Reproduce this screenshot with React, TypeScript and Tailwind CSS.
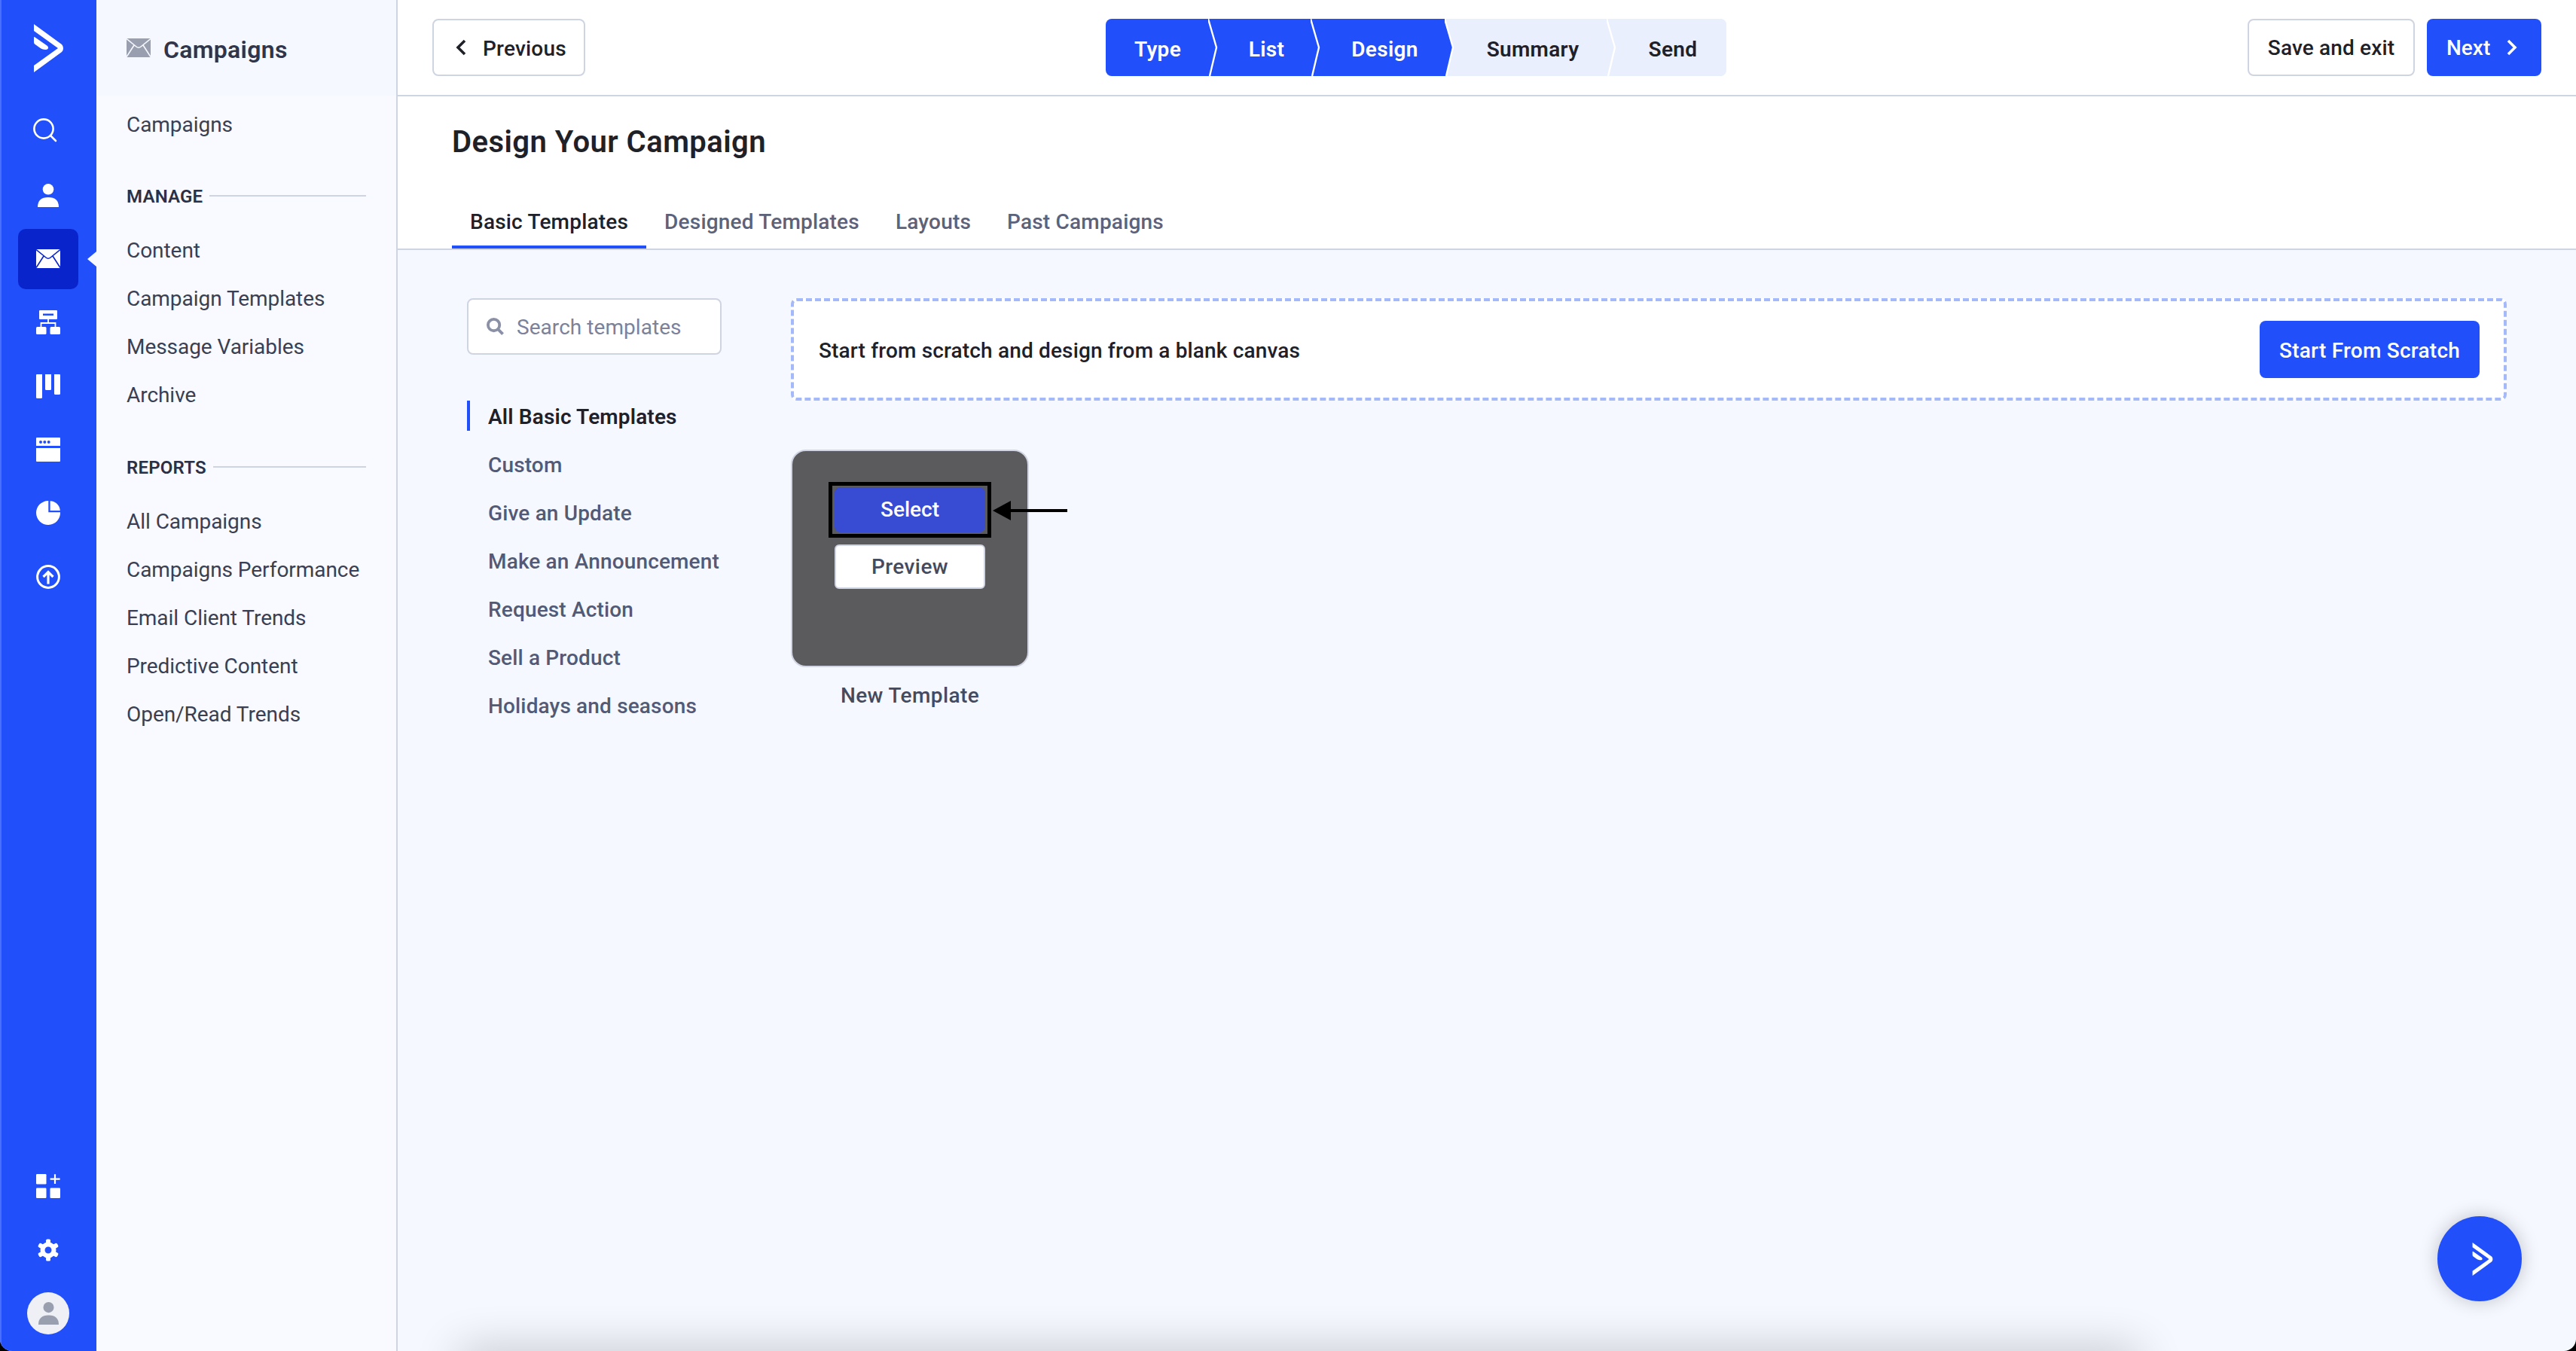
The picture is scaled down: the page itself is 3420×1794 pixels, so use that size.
// Campaign designer step: icon rail, sub navigation and the template picker
import React from 'react';

const Logo = ({ className }: { className: string }) => (
  <svg viewBox="0 0 39 64" className={className} fill="white">
    <path d="M0 0 L37 27 Q39 29 39 32 Q39 35 37 37 L0 64 V55 L32 32 L0 9 Z" />
    <path d="M0 18 Q0 16.5 1.5 17.5 L18 29 Q20 31 18.5 33 Q16.5 34.5 12 33.5 Q10 33 8 31.5 L1 26.5 Q0 25.5 0 24 Z" />
  </svg>
);

const Envelope = ({ fill, line, className }: { fill: string; line: string; className: string }) => (
  <svg viewBox="0 0 32 25" className={className}>
    <rect width="32" height="25" fill={fill} />
    <path d="M0 .5 L13 11 Q16 13.5 19 11 L32 .5 M0 24.5 L10 9 M32 24.5 L22 9" fill="none" stroke={line} strokeWidth="1.6" />
  </svg>
);

const SearchIcon = () => (
  <svg viewBox="0 0 32 32" className="w-[32px] h-[32px] -translate-x-[4px] -translate-y-[2px]" fill="none" stroke="white" strokeWidth="2.6">
    <circle cx="14" cy="14" r="12.6" />
    <path d="M23.5 23.5 L30 30" strokeLinecap="round" />
  </svg>
);

const PersonShape = ({ fill }: { fill: string }) => (
  <g fill={fill}>
    <circle cx="14" cy="7.3" r="7.3" />
    <path d="M0 31 Q0 18 14 18 Q28 18 28 31 Z" />
  </g>
);

const PersonIcon = () => (
  <svg viewBox="0 0 28 31" className="w-[28px] h-[31px]">
    <PersonShape fill="white" />
  </svg>
);

const OrgIcon = () => (
  <svg viewBox="0 0 32 32" className="w-[32px] h-[32px]" fill="white">
    <path fillRule="evenodd" d="M5 0 H27 Q28 0 28 1 V11 Q28 12 27 12 H5 Q4 12 4 11 V1 Q4 0 5 0 Z M9 4.5 V7 H23 V4.5 Z" />
    <path d="M16 12 V17 M6.5 23 V17 H25.5 V23" fill="none" stroke="white" strokeWidth="1.8" />
    <rect x="0" y="22" width="13.5" height="10" rx="1.5" />
    <rect x="18.5" y="22" width="13.5" height="10" rx="1.5" />
  </svg>
);

const BoardIcon = () => (
  <svg viewBox="0 0 32 32" className="w-[32px] h-[32px]" fill="white">
    <path d="M1 0 H8 V30.5 Q8 32 6.5 32 H1.5 Q0 32 0 30.5 V1 Q0 0 1 0 Z" />
    <path d="M12 0 H20 V19.5 Q20 21 18.5 21 H13.5 Q12 21 12 19.5 Z" />
    <path d="M24 0 H31 Q32 0 32 1 V25.5 Q32 27 30.5 27 H25.5 Q24 27 24 25.5 Z" />
  </svg>
);

const WindowIcon = () => (
  <svg viewBox="0 0 32 32" className="w-[32px] h-[32px]" fill="white">
    <path fillRule="evenodd" d="M1 0 H31 Q32 0 32 1 V11 H0 V1 Q0 0 1 0 Z M6 4 A2 2 0 1 0 6 8 A2 2 0 1 0 6 4 Z M11.3 4 A2 2 0 1 0 11.3 8 A2 2 0 1 0 11.3 4 Z M16.7 4 A2 2 0 1 0 16.7 8 A2 2 0 1 0 16.7 4 Z" />
    <path d="M0 14 H32 V31 Q32 32 31 32 H1 Q0 32 0 31 Z" />
  </svg>
);

const PieIcon = () => (
  <svg viewBox="0 0 32 32" className="w-[32px] h-[32px]" fill="white">
    <path d="M16.3 0 V15.3 H32 A16 16 0 1 1 16.3 0 Z" />
    <path d="M18.6 .3 A13.5 13.5 0 0 1 31.8 13 H18.6 Z" />
  </svg>
);

const UploadIcon = () => (
  <svg viewBox="0 0 32 32" className="w-[32px] h-[32px]" fill="none" stroke="white">
    <circle cx="16" cy="16" r="14.4" strokeWidth="3" />
    <path d="M9.5 16 L16 9.5 L22.5 16 M16 10 V25.5" strokeWidth="3.2" />
  </svg>
);

const AppsIcon = () => (
  <svg viewBox="0 0 32 32" className="w-[32px] h-[32px]" fill="white">
    <rect x="0" y="0" width="13.5" height="13.5" rx="1.2" />
    <rect x="0" y="18.5" width="13.5" height="13.5" rx="1.2" />
    <rect x="18.5" y="18.5" width="13.5" height="13.5" rx="1.2" />
    <path d="M25 .3 V13 M18.6 6.6 H31.6" stroke="white" strokeWidth="2.2" />
  </svg>
);

const GearIcon = () => (
  <svg viewBox="0 0 32 32" className="w-[30px] h-[30px]" fill="white">
    {[0, 60, 120, 180, 240, 300].map((angle) => (
      <rect key={angle} x="12.8" y="0.5" width="6.4" height="7" rx="2" transform={`rotate(${angle} 16 16)`} />
    ))}
    <circle cx="16" cy="16" r="8" fill="none" stroke="white" strokeWidth="6.4" />
  </svg>
);

const Chevron = ({ dir, color }: { dir: 'left' | 'right'; color: string }) => (
  <svg viewBox="0 0 16 22" className="w-[16px] h-[22px]" fill="none" stroke={color} strokeWidth="3.6">
    <path d={dir === 'left' ? 'M13 2 L4 11 L13 20' : 'M3 2 L12 11 L3 20'} />
  </svg>
);

const railIcons = [
  { id: 'search', icon: <SearchIcon /> },
  { id: 'contacts', icon: <PersonIcon /> },
  { id: 'campaigns', icon: <Envelope fill="white" line="#0a24cb" className="w-[32px] h-[25px]" />, active: true },
  { id: 'automations', icon: <OrgIcon /> },
  { id: 'deals', icon: <BoardIcon /> },
  { id: 'site', icon: <WindowIcon /> },
  { id: 'reports', icon: <PieIcon /> },
  { id: 'upload', icon: <UploadIcon /> },
];

const IconRail = () => (
  <aside className="w-[128px] shrink-0 flex flex-col items-center bg-[#214ffa] border-l-[2px] border-[#4a6ffc] pr-[2px]">
    <div className="h-[135px] pt-[32px]">
      <Logo className="w-[39px] h-[64px]" />
    </div>
    <div className="flex flex-col gap-[4.4px]">
      {railIcons.map((item) => (
        <div key={item.id} className="relative">
          <div className={`w-[80px] h-[80px] flex items-center justify-center rounded-[10px] ${item.active ? 'bg-[#0a24cb]' : ''}`}>
            {item.icon}
          </div>
          {item.active && (
            <div className="absolute left-[92px] top-[30px] w-0 h-0 border-y-[10px] border-y-transparent border-r-[12px] border-r-[#f8faff]" />
          )}
        </div>
      ))}
    </div>
    <div className="mt-auto flex flex-col items-center">
      <AppsIcon />
      <div className="mt-[54px]">
        <GearIcon />
      </div>
      <div className="mt-[41px] mb-[22px] w-[56px] h-[56px] rounded-full bg-[#eef0f6] flex items-center justify-center">
        <svg viewBox="0 0 28 31" className="w-[27px] h-[30px]">
          <PersonShape fill="#9a9fb0" />
        </svg>
      </div>
    </div>
  </aside>
);

const NavRow = ({ label }: { label: string }) => (
  <div className="h-[64px] pt-[2px] flex items-center text-[28px] tracking-[-0.05px] text-[#3a3f52]">{label}</div>
);

const NavHeading = ({ label, className }: { label: string; className: string }) => (
  <div className={`h-[40px] flex items-center gap-[9px] ${className}`}>
    <span className="pt-[2px] text-[24px] font-semibold tracking-[0.2px] text-[#2c3044]">{label}</span>
    <span className="flex-1 h-[2px] bg-[#cfd4e3]" />
  </div>
);

const SubNav = () => (
  <nav className="w-[400px] shrink-0 bg-[#f8faff] border-r-[2px] border-[#cfd4e3]">
    <div className="h-[127px] bg-[#f5f8ff] flex items-center pl-[40px] gap-[17px]">
      <Envelope fill="#9a9fb0" line="#f5f8ff" className="w-[32px] h-[25px]" />
      <span className="pt-[4px] text-[32px] font-semibold tracking-[0.3px] text-[#30354a]">Campaigns</span>
    </div>
    <div className="pl-[40px] pr-[40px] pt-[6px]">
      <NavRow label="Campaigns" />
      <NavHeading label="MANAGE" className="mt-[43px] mb-[20px]" />
      <NavRow label="Content" />
      <NavRow label="Campaign Templates" />
      <NavRow label="Message Variables" />
      <NavRow label="Archive" />
      <NavHeading label="REPORTS" className="mt-[44px] mb-[20px]" />
      <NavRow label="All Campaigns" />
      <NavRow label="Campaigns Performance" />
      <NavRow label="Email Client Trends" />
      <NavRow label="Predictive Content" />
      <NavRow label="Open/Read Trends" />
    </div>
  </nav>
);

const steps = [
  { label: 'Type', width: 'w-[136px] pl-[3px] z-40', active: true },
  { label: 'List', width: 'w-[136px] pl-[20px] z-30', active: true },
  { label: 'Design', width: 'w-[178px] pl-[20px] z-20', active: true },
  { label: 'Summary', width: 'w-[215px] pl-[20px] z-10', active: false },
  { label: 'Send', width: 'w-[159px] pl-[18px]', active: false, last: true },
];

const Stepper = () => (
  <div className="flex h-[76px] mr-[2px] rounded-[8px] overflow-hidden bg-[#e9effd]">
    {steps.map((step) => (
      <div
        key={step.label}
        className={`relative flex items-center justify-center pt-[5px] text-[28px] font-semibold tracking-[0.3px] ${step.width} ${step.active ? 'bg-[#214ffa] text-white' : 'bg-[#e9effd] text-[#1f2129]'}`}
      >
        {step.label}
        {!step.last && (
          <svg viewBox="0 0 14 76" className="absolute left-full top-0 w-[14px] h-[76px]">
            <path d="M-1 0 L11 38 L2 76 H-1 Z" fill={step.active ? '#214ffa' : '#e9effd'} />
            <path d="M0 0 L11 38 L2 76" fill="none" stroke="white" strokeWidth="2.4" />
          </svg>
        )}
      </div>
    ))}
  </div>
);

const TopBar = () => (
  <header className="h-[128px] shrink-0 bg-white border-b-[2px] border-[#cfd4e3] pl-[46px] pr-[46px] flex items-center justify-between">
    <button className="w-[203px] h-[76px] bg-white border-[2px] border-[#cfd4e3] rounded-[8px] flex items-center gap-[21px] pl-[28px] text-[28px] font-medium tracking-[0.2px] text-[#1f2129]">
      <Chevron dir="left" color="#1f2129" />
      <span className="pt-[3px]">Previous</span>
    </button>
    <Stepper />
    <div className="flex gap-[16px]">
      <button className="w-[222px] h-[76px] pt-[2px] bg-white border-[2px] border-[#cfd4e3] rounded-[8px] text-[28px] font-medium tracking-[0.15px] text-[#1f2129]">
        Save and exit
      </button>
      <button className="w-[152px] h-[76px] bg-[#214ffa] rounded-[8px] flex items-center gap-[21px] pl-[26px] text-[28px] font-medium text-white">
        <span className="pt-[2px]">Next</span>
        <Chevron dir="right" color="white" />
      </button>
    </div>
  </header>
);

const tabs = ['Basic Templates', 'Designed Templates', 'Layouts', 'Past Campaigns'];

const categories = [
  'All Basic Templates',
  'Custom',
  'Give an Update',
  'Make an Announcement',
  'Request Action',
  'Sell a Product',
  'Holidays and seasons',
];

const TemplateCard = () => (
  <div className="w-[316px] mt-[65px]">
    <div className="h-[289px] bg-[#5b5b5d] border-[2px] border-[#d1d5e3] rounded-[20px] flex flex-col items-center pt-[41px]">
      <div className="relative w-[216px] h-[74px] border-[5px] border-black px-[3px] py-[2px]">
        <button className="w-full h-full bg-[#384bd3] rounded-[8px] text-[28px] font-medium text-white">Select</button>
        {/* Annotation arrow pointing at the Select button */}
        <svg viewBox="0 0 99 26" className="absolute left-[213px] top-[20px] w-[99px] h-[26px]">
          <path d="M0 13 L24 0 V26 Z" fill="black" />
          <path d="M20 13 H99" stroke="black" strokeWidth="4" />
        </svg>
      </div>
      <button className="mt-[9px] w-[200px] h-[59px] pt-[1px] bg-white border-[2px] border-[#cfd4e3] rounded-[6px] text-[28px] font-medium tracking-[0.4px] text-[#454b5f]">
        Preview
      </button>
    </div>
    <div className="mt-[18px] h-[40px] flex items-center justify-center text-[28px] font-medium tracking-[0.4px] whitespace-nowrap text-[#454b5f]">New Template</div>
  </div>
);

export default function App() {
  return (
    <div className="w-[3420px] h-[1794px] bg-black overflow-hidden font-[Roboto,sans-serif]">
      <div className="relative w-full h-full flex rounded-b-[16px] overflow-hidden bg-[#f5f8ff]">
        <IconRail />
        <SubNav />
        <main className="flex-1 min-w-0 flex flex-col">
          <TopBar />
          <div className="h-[204px] shrink-0 bg-white border-b-[2px] border-[#cfd4e3] pl-[72px]">
            <h1 className="pt-[32px] h-[90px] flex items-center text-[40px] font-semibold tracking-[0.45px] text-[#1f2129]">Design Your Campaign</h1>
            <div className="mt-[42px] flex">
              {tabs.map((tab, i) => (
                <div
                  key={tab}
                  className={`h-[70px] px-[24px] pt-[4px] flex items-center border-b-[4px] text-[28px] font-medium tracking-[0.2px] ${i === 0 ? 'border-[#214ffa] text-[#1f2129]' : 'border-transparent text-[#5b6279]'}`}
                >
                  {tab}
                </div>
              ))}
            </div>
          </div>
          <div className="flex pl-[92px] pr-[92px] pt-[64px] gap-[92px]">
            <div className="w-[338px] shrink-0">
              <div className="h-[75px] bg-white border-[2px] border-[#cfd4e3] rounded-[8px] flex items-center pl-[24px] gap-[17px]">
                <svg viewBox="0 0 24 24" className="w-[23px] h-[23px]" fill="none" stroke="#8a90a6" strokeWidth="4">
                  <circle cx="10" cy="10" r="8" />
                  <path d="M16 16 L22.5 22.5" />
                </svg>
                <span className="pt-[2px] text-[28px] tracking-[0.05px] text-[#7b8299]">Search templates</span>
              </div>
              <div className="mt-[49px]">
                {categories.map((cat, i) => (
                  <div key={cat} className="h-[64px] flex items-center">
                    <div
                      className={`h-[40px] flex items-center border-l-[4px] pl-[24px] pt-[3px] text-[28px] tracking-[0.15px] whitespace-nowrap ${i === 0 ? 'border-[#214ffa] font-semibold text-[#1f2129]' : 'border-transparent font-medium text-[#525a75]'}`}
                    >
                      {cat}
                    </div>
                  </div>
                ))}
              </div>
            </div>
            <div className="flex-1 min-w-0">
              <div className="h-[136px] bg-white border-[4px] border-dashed border-[#a3b9fa] rounded-[8px] flex items-center justify-between pl-[33px] pr-[32px]">
                <span className="pt-[3px] text-[28px] font-medium tracking-[0.16px] text-[#1f2129]">Start from scratch and design from a blank canvas</span>
                <button className="w-[292px] h-[76px] pt-[3px] bg-[#214ffa] rounded-[8px] text-[28px] font-medium tracking-[0.25px] text-white">Start From Scratch</button>
              </div>
              <TemplateCard />
            </div>
          </div>
        </main>
        {/* Help launcher */}
        <div className="absolute left-[3236px] top-[1615px] w-[112px] h-[113px] rounded-full bg-[#214ffa] shadow-[0_0_24px_rgba(0,0,0,0.22)] flex items-center justify-center pl-[8px]">
          <Logo className="w-[30px] h-[44px]" />
        </div>
        {/* Shadow thrown by the bar hidden below the fold */}
        <div className="absolute left-[610px] top-[1794px] w-[2230px] h-[40px] shadow-[0_0_60px_rgba(0,0,0,0.24)]" />
      </div>
    </div>
  );
}
